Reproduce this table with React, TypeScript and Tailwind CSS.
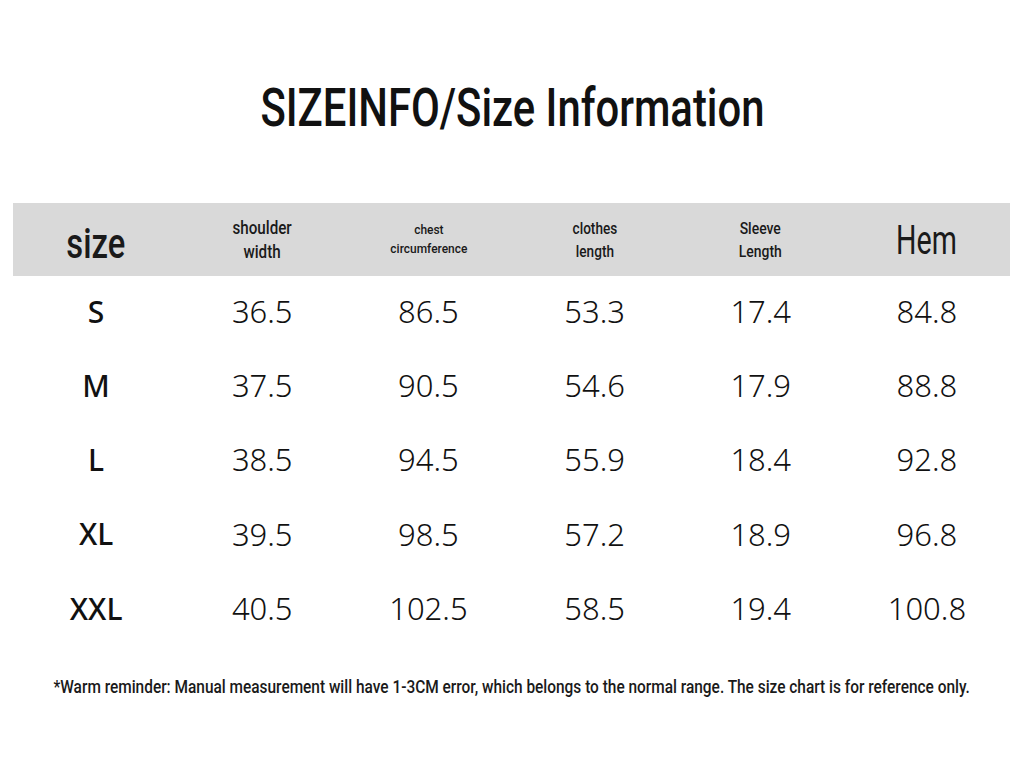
const cond = "inline-block font-['Roboto','Liberation_Sans',sans-serif] origin-center";

const rows = [
  { size: "S", vals: ["36.5", "86.5", "53.3", "17.4", "84.8"] },
  { size: "M", vals: ["37.5", "90.5", "54.6", "17.9", "88.8"] },
  { size: "L", vals: ["38.5", "94.5", "55.9", "18.4", "92.8"] },
  { size: "XL", vals: ["39.5", "98.5", "57.2", "18.9", "96.8"] },
  { size: "XXL", vals: ["40.5", "102.5", "58.5", "19.4", "100.8"] },
];

export default function App() {
  return (
    <div className="w-[1024px] h-[768px] bg-white overflow-hidden flex flex-col">
      {/* Title */}
      <div className="h-[203px] flex items-start justify-center pt-[76px]">
        <h1 className={`${cond} scale-x-[0.789] text-[53px] leading-[64px] font-medium text-[#111] whitespace-nowrap`}>
          SIZEINFO/Size Information
        </h1>
      </div>

      {/* Table */}
      <div className="mx-[13px] w-[997px]">
        <div className="grid grid-cols-6 h-[73px] bg-[#d9d9d9] text-[#1a1a1a] items-center text-center">
          <div className="pt-[8px]">
            <span className={`${cond} scale-x-[0.78] text-[42px] leading-[48px] font-medium`}>size</span>
          </div>
          <div>
            <span className={`${cond} scale-x-[0.8] text-[19px] leading-[24px] font-medium`}>shoulder<br />width</span>
          </div>
          <div>
            <span className={`${cond} scale-x-[0.92] text-[13px] leading-[19px] font-medium`}>chest<br />circumference</span>
          </div>
          <div>
            <span className={`${cond} scale-x-[0.8] text-[17px] leading-[23px] font-medium`}>clothes<br />length</span>
          </div>
          <div>
            <span className={`${cond} scale-x-[0.82] text-[17px] leading-[23px] font-medium`}>Sleeve<br />Length</span>
          </div>
          <div>
            <span className={`${cond} scale-x-[0.7] text-[41px] leading-[48px]`}>Hem</span>
          </div>
        </div>

        <div className="font-['Noto_Sans','Open_Sans',sans-serif] text-[#111] -mt-[2px]">
          {rows.map((r) => (
            <div key={r.size} className="grid grid-cols-6 h-[74.25px] items-center text-center">
              <div className="text-[30px] font-medium">{r.size}</div>
              {r.vals.map((v, i) => (
                <div key={i} className="text-[31px] font-light">{v}</div>
              ))}
            </div>
          ))}
        </div>
      </div>

      {/* Footer note */}
      <div className="flex justify-center pt-[30px]">
        <p className={`${cond} scale-x-[0.857] text-[18px] leading-[24px] font-medium text-[#1a1a1a] whitespace-nowrap`}>
          *Warm reminder: Manual measurement will have 1-3CM error, which belongs to the normal range. The size chart is for reference only.
        </p>
      </div>
    </div>
  );
}
